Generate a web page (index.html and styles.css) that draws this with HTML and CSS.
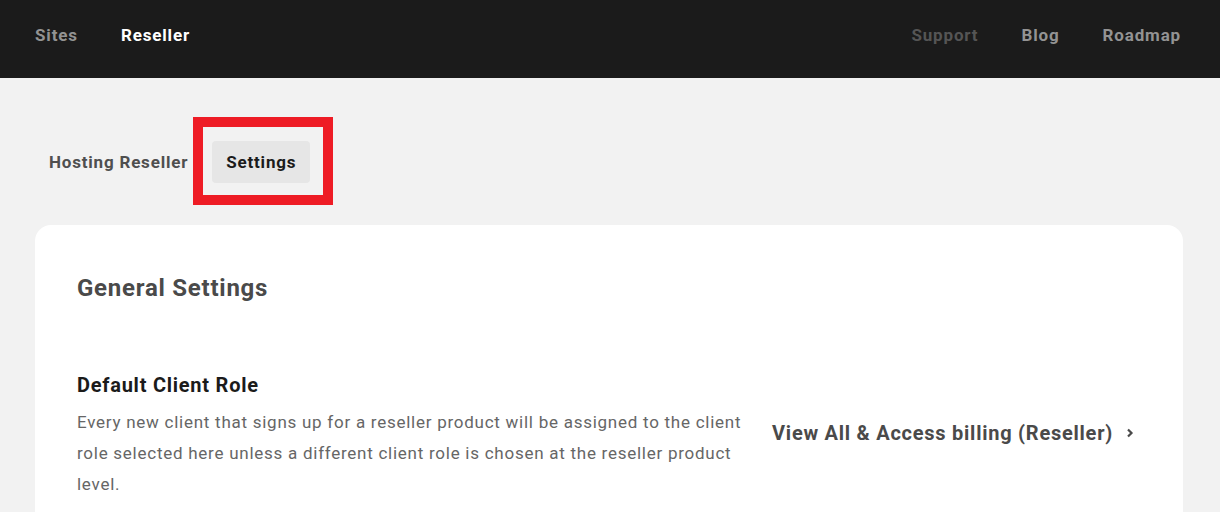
FILE: index.html
```html
<!DOCTYPE html>
<html lang="en">
<head>
    <meta charset="UTF-8">
    <meta name="viewport" content="width=device-width, initial-scale=1.0">
    <title>Reseller - Settings</title>
    <link rel="stylesheet" href="styles.css">
</head>
<body>
    <header class="topbar">
        <nav class="nav-left">
            <a href="#" class="nav-link">Sites</a>
            <a href="#" class="nav-link active">Reseller</a>
        </nav>
        <nav class="nav-right">
            <a href="#" class="nav-link dim">Support</a>
            <a href="#" class="nav-link">Blog</a>
            <a href="#" class="nav-link">Roadmap</a>
        </nav>
    </header>

    <main class="main">
        <div class="tabs">
            <a href="#" class="tab">Hosting Reseller</a>
            <a href="#" class="tab active">Settings<span class="highlight"></span></a>
        </div>

        <section class="card">
            <h2 class="card-title">General Settings</h2>

            <div class="setting-row">
                <div class="setting-info">
                    <h3 class="setting-name">Default Client Role</h3>
                    <p class="setting-desc">Every new client that signs up for a reseller product will be assigned to the client role selected here unless a different client role is chosen at the reseller product level.</p>
                </div>
                <a href="#" class="setting-link">
                    View All &amp; Access billing (Reseller)
                    <svg class="chevron" width="10" height="12" viewBox="0 0 10 12">
                        <path d="M3 2.5 L6.5 6 L3 9.5" fill="none" stroke="currentColor" stroke-width="2.2"/>
                    </svg>
                </a>
            </div>
        </section>
    </main>
</body>
</html>
```

FILE: styles.css
```css
:root {
    --topbar: #1b1b1b;
    --background: #f2f2f2;
    --card: #ffffff;
    --text: #1b1b1b;
    --heading: #4a4a4a;
    --muted: #666666;
    --tab-active: #e6e6e6;
    --annotation: #ee1c25;
}

* {
    margin: 0;
    padding: 0;
    box-sizing: border-box;
    font-family: Roboto, 'Liberation Sans', Arial, sans-serif;
    letter-spacing: 0.75px;
}

body {
    background-color: var(--background);
    color: var(--text);
    min-height: 100vh;
}

a {
    text-decoration: none;
    color: inherit;
}

.topbar {
    background-color: var(--topbar);
    height: 78px;
    display: flex;
    align-items: center;
    justify-content: space-between;
    padding: 0 39px 8px 35px;
}

.nav-left,
.nav-right {
    display: flex;
    gap: 43px;
}

.nav-link {
    font-size: 17px;
    font-weight: 700;
    color: #939393;
    letter-spacing: 0.85px;
}

.nav-link.active {
    color: #ffffff;
}

.nav-link.dim {
    color: #555555;
}

.main {
    padding: 63px 37px 0 35px;
}

.tabs {
    display: flex;
    gap: 10px;
    margin-bottom: 42px;
}

.tab {
    position: relative;
    height: 42px;
    display: flex;
    align-items: center;
    padding: 0 14px;
    border-radius: 4px;
    font-size: 17px;
    font-weight: 700;
    color: #4f4f4f;
    letter-spacing: 0.8px;
}

.tab.active {
    background-color: var(--tab-active);
    color: var(--text);
}

.highlight {
    position: absolute;
    left: -19px;
    top: -24px;
    right: -23px;
    bottom: -22px;
    border: 10px solid var(--annotation);
    pointer-events: none;
}

.card {
    background-color: var(--card);
    border-radius: 16px;
    padding: 49px 42px 40px;
}

.card-title {
    font-size: 24px;
    font-weight: 700;
    line-height: 28px;
    color: var(--heading);
    margin-bottom: 71px;
}

.setting-row {
    display: grid;
    grid-template-columns: 1fr auto;
    gap: 22px;
    align-items: center;
}

.setting-name {
    font-size: 20px;
    font-weight: 700;
    line-height: 24px;
    color: var(--text);
    margin-bottom: 10px;
}

.setting-desc {
    font-size: 17px;
    line-height: 31px;
    color: var(--muted);
    letter-spacing: 0.74px;
}

.setting-link {
    display: flex;
    align-items: center;
    gap: 12px;
    font-size: 20px;
    font-weight: 700;
    color: var(--heading);
    padding: 0 6px 8px 0;
}

.chevron {
    color: var(--heading);
}
```
